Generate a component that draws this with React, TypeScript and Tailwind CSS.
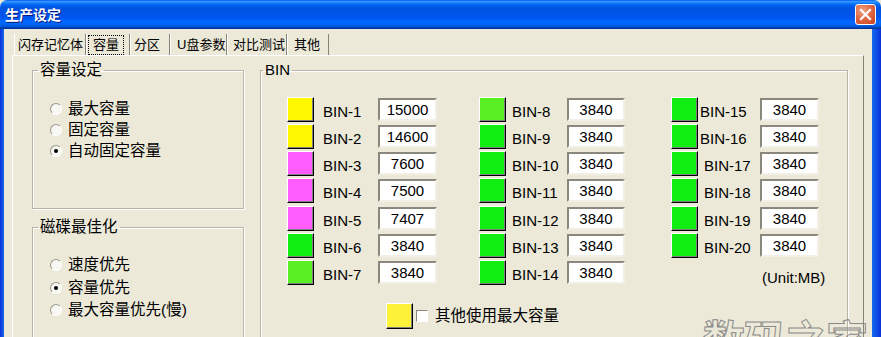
import React from "react";

type Bin = { n: number; color: string; value: string; pad?: number };

const yellow = "#FFF700";
const pink = "#FF5CFF";
const green = "#11EE11";
const lime = "#5AEE25";

const col1: Bin[] = [
  { n: 1, color: yellow, value: "15000" },
  { n: 2, color: yellow, value: "14600" },
  { n: 3, color: pink, value: "7600" },
  { n: 4, color: pink, value: "7500" },
  { n: 5, color: pink, value: "7407" },
  { n: 6, color: green, value: "3840" },
  { n: 7, color: lime, value: "3840" },
];

const col2: Bin[] = [
  { n: 8, color: lime, value: "3840" },
  { n: 9, color: green, value: "3840" },
  { n: 10, color: green, value: "3840" },
  { n: 11, color: green, value: "3840" },
  { n: 12, color: green, value: "3840" },
  { n: 13, color: green, value: "3840" },
  { n: 14, color: green, value: "3840" },
];

const col3: Bin[] = [
  { n: 15, color: green, value: "3840", pad: 2 },
  { n: 16, color: green, value: "3840", pad: 2 },
  { n: 17, color: green, value: "3840", pad: 6 },
  { n: 18, color: green, value: "3840", pad: 6 },
  { n: 19, color: green, value: "3840", pad: 6 },
  { n: 20, color: green, value: "3840", pad: 6 },
];

const tabs = [
  { label: "闪存记忆体", w: "w-[72px]", pl: "pl-[3px]" },
  { label: "容量", w: "w-[44px]", pl: "pl-[7px]", active: true },
  { label: "分区", w: "w-[40px]", pl: "pl-[3px]" },
  { label: "U盘参数", w: "w-[57px]", pl: "pl-[6px]" },
  { label: "对比测试", w: "w-[60px]", pl: "pl-[5px]" },
  { label: "其他", w: "w-[42px]", pl: "pl-[6px]" },
];

const Swatch = ({ color }: { color: string }) => (
  <div
    className="w-[27px] h-[25px] border-t border-l border-t-white border-l-white border-r border-b border-r-black border-b-black shadow-[inset_-1px_-1px_0_#808080]"
    style={{ backgroundColor: color }}
  />
);

const Radio = ({ checked }: { checked?: boolean }) => (
  <span className="w-[12px] h-[12px] rounded-full bg-[#F7F7F3] border border-t-[#9A988C] border-l-[#9A988C] border-r-white border-b-white flex items-center justify-center shrink-0">
    {checked && <span className="w-[4px] h-[4px] rounded-full bg-black" />}
  </span>
);

const BinColumn = ({
  bins,
  labelW,
  labelPad,
  inputW,
  children,
}: {
  bins: Bin[];
  labelW: string;
  labelPad: string;
  inputW: string;
  children?: React.ReactNode;
}) => (
  <div className="flex flex-col">
    {bins.map((b) => (
      <div key={b.n} className="flex h-[27.17px]">
        <Swatch color={b.color} />
        <div
          className={`${labelW} ${b.pad === undefined ? labelPad : ""} pt-[2px] leading-[25px]`}
          style={b.pad !== undefined ? { paddingLeft: b.pad } : undefined}
        >
          BIN-{b.n}
        </div>
        <div
          className={`${inputW} h-[23px] mt-[1px] bg-white border-2 border-t-[#8A887C] border-l-[#8A887C] border-r-[#F1EFE6] border-b-[#F1EFE6] text-center leading-[19px]`}
        >
          {b.value}
        </div>
      </div>
    ))}
    {children}
  </div>
);

export default function App() {
  return (
    <div className="relative w-[881px] h-[337px] overflow-hidden bg-[#ECE9D8] font-['Liberation_Sans','Noto_Sans_CJK_SC',sans-serif] text-black">
      {/* title bar */}
      <div className="h-[29px] rounded-t-[7px] flex items-center justify-between pl-[5px] pr-[5px] bg-[linear-gradient(to_bottom,#0058EE_0%,#3593FF_5%,#288EFF_8%,#127DFF_11%,#036FFC_14%,#0262EE_18%,#0057E5_24%,#0054E3_30%,#0055EB_56%,#005BF5_66%,#026AFE_76%,#0062EF_86%,#0052D6_92%,#0040AB_96%,#003092_100%)]">
        <span className="text-white font-bold text-[14px] leading-[20px] [text-shadow:1px_1px_0_#0A1883]">
          生产设定
        </span>
        <div className="w-[21px] h-[21px] rounded-[3px] border border-white bg-[radial-gradient(circle_at_35%_30%,#F0A386_0%,#E26A45_45%,#C8401D_100%)] flex items-center justify-center">
          <svg width="13" height="13" viewBox="0 0 13 13">
            <path d="M2 2 L11 11 M11 2 L2 11" stroke="white" strokeWidth="2.2" strokeLinecap="square" />
          </svg>
        </div>
      </div>

      <div className="flex h-[308px]">
        <div className="w-[4px] bg-[linear-gradient(to_right,#0831D9,#166AEE)]" />
        <div className="flex-1 pt-[5px] px-[8px] flex flex-col">
          {/* tabs */}
          <div className="flex h-[21px] pl-[2px] text-[13px]">
            {tabs.map((t) => (
              <div
                key={t.label}
                className={`${t.w} ${t.pl} shrink-0 whitespace-nowrap border-l border-l-white border-r border-r-[#85837A] flex items-center h-[21px] leading-[16px]`}
              >
                {t.active ? (
                  <span className="border border-dotted border-black px-[4px] py-[1px] -ml-[6px]">
                    {t.label}
                  </span>
                ) : (
                  t.label
                )}
              </div>
            ))}
          </div>

          {/* tab page */}
          <div className="flex-1 border-t border-l border-t-white border-l-white border-r border-r-[#85837A] flex pt-[4px] pl-[19px] gap-[16px] text-[15px]">
            <div className="flex flex-col w-[212px]">
              <fieldset className="h-[149px] border border-[#B8B5A6] shadow-[inset_1px_1px_0_#fff,1px_1px_0_#fff]">
                <legend className="ml-[5px] px-[2px] leading-[20px] text-[15.5px]">容量设定</legend>
                <div className="pt-[18px] pl-[17px] flex flex-col">
                  {[
                    ["最大容量", false],
                    ["固定容量", false],
                    ["自动固定容量", true],
                  ].map(([label, checked]) => (
                    <div key={label as string} className="flex items-center gap-[6px] h-[21.2px] text-[15.5px]">
                      <Radio checked={checked as boolean} />
                      <span className="leading-[20px]">{label}</span>
                    </div>
                  ))}
                </div>
              </fieldset>
              <fieldset className="mt-[8px] h-[130px] border border-[#B8B5A6] shadow-[inset_1px_1px_0_#fff,1px_1px_0_#fff]">
                <legend className="ml-[5px] px-[2px] leading-[20px] text-[15.5px]">磁碟最佳化</legend>
                <div className="pt-[17px] pl-[17px] flex flex-col">
                  {[
                    ["速度优先", false],
                    ["容量优先", true],
                    ["最大容量优先(慢)", false],
                  ].map(([label, checked]) => (
                    <div key={label as string} className="flex items-center gap-[6px] h-[22.5px] text-[15.5px]">
                      <Radio checked={checked as boolean} />
                      <span className="leading-[20px]">{label}</span>
                    </div>
                  ))}
                </div>
              </fieldset>
            </div>

            <fieldset className="w-[588px] h-[290px] border border-[#B8B5A6] shadow-[inset_1px_1px_0_#fff,1px_1px_0_#fff]">
              <legend className="ml-[2px] px-[2px] leading-[20px]">BIN</legend>
              <div className="pt-[17px] pl-[26px] flex">
                <BinColumn bins={col1} labelW="w-[64px]" labelPad="pl-[9px]" inputW="w-[59px]" />
                <div className="ml-[42px]">
                  <BinColumn bins={col2} labelW="w-[61px]" labelPad="pl-[6px]" inputW="w-[58px]" />
                </div>
                <div className="ml-[46px]">
                  <BinColumn bins={col3} labelW="w-[62px]" labelPad="pl-[2px]" inputW="w-[59px]">
                    <div className="h-[27.17px] pl-[91px] pt-[8px] leading-[20px]">(Unit:MB)</div>
                  </BinColumn>
                </div>
              </div>
              <div className="mt-[16px] ml-[125px] flex items-center">
                <div
                  className="w-[27px] h-[26px] border-t border-l border-t-white border-l-white border-r border-b border-r-black border-b-black shadow-[inset_-1px_-1px_0_#808080]"
                  style={{ backgroundColor: "#FFF33A" }}
                />
                <span className="ml-[3px] w-[12px] h-[12px] bg-white border border-t-[#8A887C] border-l-[#8A887C] border-r-white border-b-white" />
                <span className="ml-[7px] leading-[20px] text-[15.5px]">其他使用最大容量</span>
              </div>
            </fieldset>
          </div>
        </div>
        <div className="w-[9px] bg-[linear-gradient(to_right,#166AEE,#0831D9)]" />
      </div>

      {/* watermark */}
      <div className="absolute left-[703px] top-[314px] text-[42px] leading-[48px] font-bold tracking-[-1px] text-transparent [-webkit-text-stroke:1px_#8A8A8A] font-['Noto_Sans_CJK_SC',sans-serif] pointer-events-none">
        数码之家
      </div>
    </div>
  );
}
